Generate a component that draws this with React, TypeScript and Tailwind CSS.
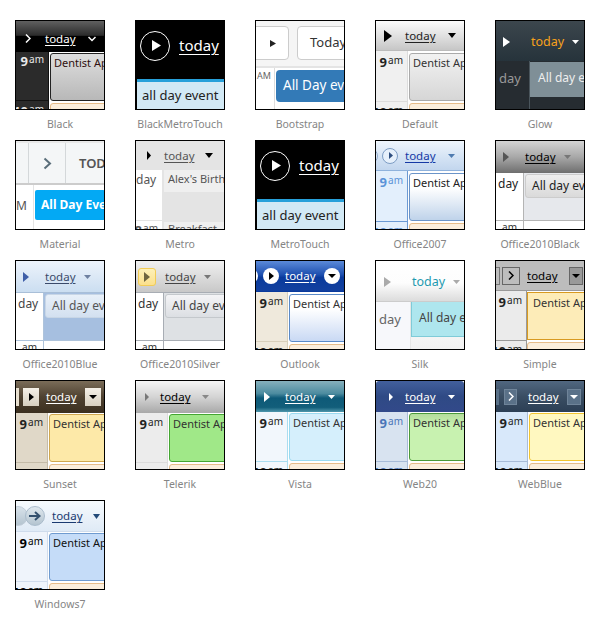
import React from "react";

const Tri = ({ w = 6, h = 10, cls = "text-black", ml = "" }: { w?: number; h?: number; cls?: string; ml?: string }) => (
  <svg width={w} height={h} viewBox="0 0 6 10" preserveAspectRatio="none" className={`shrink-0 ${cls} ${ml}`}>
    <polygon points="0,0 6,5 0,10" fill="currentColor" />
  </svg>
);
const Caret = ({ w = 8, h = 5, cls = "text-black", ml = "" }: { w?: number; h?: number; cls?: string; ml?: string }) => (
  <svg width={w} height={h} viewBox="0 0 8 5" preserveAspectRatio="none" className={`shrink-0 ${cls} ${ml}`}>
    <polygon points="0,0 8,0 4,5" fill="currentColor" />
  </svg>
);
const Chev = ({ cls = "text-white", ml = "", dir = "r" }: { cls?: string; ml?: string; dir?: "r" | "d" }) => (
  <svg width={dir === "r" ? 6 : 8} height={dir === "r" ? 9 : 6} viewBox={dir === "r" ? "0 0 6 9" : "0 0 8 6"} className={`shrink-0 ${cls} ${ml}`}>
    <polyline points={dir === "r" ? "1,0.5 5,4.5 1,8.5" : "0.5,1 4,4.5 7.5,1"} fill="none" stroke="currentColor" strokeWidth="1.5" />
  </svg>
);
const Today = ({ cls = "text-black", ml = "" }: { cls?: string; ml?: string }) => (
  <span className={`text-[11.5px] leading-none underline underline-offset-[2px] shrink-0 ${cls} ${ml}`}>today</span>
);
const Hdr = ({ cls, children }: { cls: string; children?: React.ReactNode }) => (
  <div className={`flex items-center shrink-0 overflow-hidden ${cls}`}>{children}</div>
);
const Time = ({ cls = "text-[#222]", h = "9" }: { cls?: string; h?: string }) => (
  <span className={`leading-none whitespace-nowrap ${cls}`}>
    <span className="text-[13px] font-bold">{h}</span>
    <span className="text-[10px] relative top-[-3px] ml-[1px]">am</span>
  </span>
);

/* Day view body: 9am column + Dentist appointment + clipped 10am row */
const DayBody = ({
  w,
  bg,
  line,
  timeCls,
  ap,
  apText = "text-[#333]",
  gap = "pl-[1px] pt-[1px]",
  rowH = "h-[49px]",
  timeTop = "pt-[2px]",
}: {
  w: string;
  bg: string;
  line: string;
  timeCls?: string;
  ap: string;
  apText?: string;
  gap?: string;
  rowH?: string;
  timeTop?: string;
}) => (
  <div className="flex flex-1 min-h-0">
    <div className={`flex flex-col shrink-0 border-r ${w} ${bg} ${line}`}>
      <div className={`flex justify-end items-start pr-[4px] border-b shrink-0 ${rowH} ${line} ${timeTop}`}>
        <Time cls={timeCls} />
      </div>
      <div className="flex justify-end pr-[4px] pt-[1px]">
        <Time cls={timeCls} h="10" />
      </div>
    </div>
    <div className={`flex-1 min-w-0 flex flex-col bg-white overflow-hidden ${gap}`}>
      <div className={`shrink-0 border rounded-[3px] w-[60px] pl-[3px] pt-[1px] text-[11px] leading-[16px] whitespace-nowrap overflow-hidden h-[48px] ${ap} ${apText}`}>
        Dentist Appointment
      </div>
      <div className="shrink-0 mt-[2px] h-[12px] w-[60px] border border-[#e6bc8a] rounded-[3px] bg-[#fbeedc]" />
    </div>
  </div>
);

/* Week view body: all-day header row */
const AllDay = ({
  timeW,
  evCls,
  evText,
  fill,
  line,
  dayCls = "text-[#333]",
  label = "All day event",
}: {
  timeW: string;
  evCls: string;
  evText: string;
  fill: string;
  line: string;
  dayCls?: string;
  label?: string;
}) => (
  <div className="flex flex-col flex-1 min-h-0 bg-white">
    <div className={`flex shrink-0 h-[48px] border-b ${line}`}>
      <div className={`shrink-0 border-r overflow-hidden pl-[2px] pt-[2px] text-[12px] leading-[18px] ${timeW} ${line} ${dayCls}`}>day</div>
      <div className={`flex-1 min-w-0 overflow-hidden ${fill}`}>
        <div className={`h-[24px] ml-[1px] mt-[1px] w-[70px] rounded-[3px] border text-[12px] leading-[21px] pl-[6px] whitespace-nowrap overflow-hidden ${evCls} ${evText}`}>{label}</div>
      </div>
    </div>
    <div className="flex flex-1 min-h-0">
      <div className={`shrink-0 border-r text-[10px] leading-[10px] flex justify-end pt-[1px] pr-[6px] text-[#333] ${timeW} ${line}`}>am</div>
      <div className="flex-1" />
    </div>
  </div>
);

const MetroTouch = () => (
  <div className="flex flex-col h-full bg-black">
    <Hdr cls="h-[58px] pl-[4px] pb-[9px]">
      <div className="w-[30px] h-[30px] rounded-full border border-white flex items-center justify-center pl-[2px]">
        <Tri w={9} h={11} cls="text-white" />
      </div>
      <span className="ml-[9px] text-[15px] leading-none text-white underline underline-offset-[3px]">today</span>
    </Hdr>
    <div className="flex-1 ml-[1px] border-t-[3px] border-[#27a0da] bg-[#d2e9f5] pl-[5px] pt-[3px] text-[13px] leading-[20px] text-[#222] whitespace-nowrap overflow-hidden">
      all day event
    </div>
  </div>
);

const items: { name: string; el: React.ReactNode }[] = [
  {
    name: "Black",
    el: (
      <div className="flex flex-col h-full">
        <Hdr cls="h-[31px] pt-[4px] bg-[linear-gradient(#606060,#2c2c2c_46%,#000_50%,#000)]">
          <Chev ml="ml-[9px]" />
          <Today cls="text-white" ml="ml-[14px]" />
          <Chev dir="d" ml="ml-[12px]" />
        </Hdr>
        <DayBody w="w-[33px]" bg="bg-[#2b2b2b]" line="border-[#111]" timeCls="text-[#e8e8e8]" timeTop="pt-[0px]"
          ap="border-[#222] bg-[linear-gradient(#dedede,#b8b8b8)]" apText="text-[#301010]" gap="pl-[1px] pt-[1px] bg-[#1c1c1c]" />
      </div>
    ),
  },
  { name: "BlackMetroTouch", el: <MetroTouch /> },
  {
    name: "Bootstrap",
    el: (
      <div className="flex flex-col h-full bg-white">
        <Hdr cls="h-[47px] bg-[#f5f5f5] border-b-2 border-[#e4e4e4] pb-[1px]">
          <div className="ml-[-8px] w-[41px] h-[34px] shrink-0 bg-white border border-[#ccc] rounded-[4px] flex items-center justify-center pl-[8px]">
            <Tri w={6} h={7} cls="text-[#222]" />
          </div>
          <div className="ml-[8px] w-[60px] h-[34px] shrink-0 bg-white border border-[#ccc] rounded-[4px] pl-[12px] text-[13px] leading-[31px] text-[#333]">Today</div>
        </Hdr>
        <div className="flex flex-1 min-h-0">
          <div className="w-[19px] shrink-0 border-r border-[#ddd] flex justify-end pr-[3px] pt-[1px] text-[9px] leading-[14px] text-[#666]">AM</div>
          <div className="flex-1 min-w-0 overflow-hidden pl-[1px] pt-[2px]">
            <div className="w-[72px] h-[32px] bg-[#337ab7] rounded-[4px] text-white text-[13.5px] leading-[31px] pl-[7px] whitespace-nowrap overflow-hidden">All Day event</div>
          </div>
        </div>
      </div>
    ),
  },
  {
    name: "Default",
    el: (
      <div className="flex flex-col h-full rounded-t-[3px] overflow-hidden">
        <Hdr cls="h-[30px] bg-[linear-gradient(#fbfbfb,#dcdcdc_60%,#c6c6c6)] border-b border-[#bbb]">
          <Tri w={8} h={12} ml="ml-[8px]" />
          <Today cls="text-[#222]" ml="ml-[13px]" />
          <Caret ml="ml-[12px]" />
        </Hdr>
        <DayBody w="w-[32px]" bg="bg-[#f0f0f0]" line="border-[#dcdcdc]" gap="pl-[1px] pt-[2px]"
          ap="border-[#aaa] bg-[linear-gradient(#f2f2f2,#d6d6d6)]" rowH="h-[51px]" />
      </div>
    ),
  },
  {
    name: "Glow",
    el: (
      <div className="flex flex-col h-full bg-[#262c31]">
        <Hdr cls="h-[40px] pt-[2px] bg-[linear-gradient(#3c464d,#26333b)]">
          <Tri w={7} h={10} cls="text-white" ml="ml-[7px]" />
          <span className="ml-[21px] text-[12.5px] leading-none text-[#f7a11b]">today</span>
          <Caret w={7} h={4} cls="text-white" ml="ml-[8px]" />
        </Hdr>
        <div className="flex flex-1 min-h-0">
          <div className="w-[34px] shrink-0 border-r border-[#4a555c] text-[13px] leading-[20px] text-[#999] pl-[3px] pt-[7px]">day</div>
          <div className="flex-1 min-w-0">
            <div className="h-[35px] mt-[1px] bg-[#7f8f97] text-[#eee] text-[12px] leading-[32px] pl-[8px] whitespace-nowrap overflow-hidden">All day event</div>
          </div>
        </div>
      </div>
    ),
  },
  {
    name: "Material",
    el: (
      <div className="flex flex-col h-full bg-white">
        <Hdr cls="h-[44px] bg-[#f4f6f7] border-b-2 border-[#ccc] border-t-2 border-t-[#e8e8e8] items-stretch">
          <div className="w-[13px] shrink-0 border-r border-[#d4d8da]" />
          <div className="w-[37px] shrink-0 border-r border-[#d4d8da] flex items-center justify-center"><svg width="9" height="13" viewBox="0 0 9 13" className="text-[#5a6e7a]"><polyline points="1.5,1.5 7,6.5 1.5,11.5" fill="none" stroke="currentColor" strokeWidth="2" /></svg></div>
          <div className="pl-[13px] text-[13px] font-semibold leading-[40px] text-[#555]">TODAY</div>
        </Hdr>
        <div className="flex flex-1 min-h-0">
          <div className="w-[18px] shrink-0 border-r border-[#e4e4e4] flex justify-end pr-[6px] pt-[12px] text-[12px] leading-[18px] text-[#555]">M</div>
          <div className="flex-1 min-w-0 overflow-hidden pl-[1px] pt-[5px]">
            <div className="w-[70px] h-[30px] bg-[#03a9f4] rounded-[2px] text-white text-[12px] font-bold leading-[29px] pl-[6px] whitespace-nowrap overflow-hidden">All Day Event</div>
          </div>
        </div>
      </div>
    ),
  },
  {
    name: "Metro",
    el: (
      <div className="flex flex-col h-full bg-[#e4e4e4]">
        <Hdr cls="h-[29px]">
          <Tri w={4} h={9} ml="ml-[11px]" />
          <Today cls="text-[#555]" ml="ml-[13px]" />
          <Caret ml="ml-[10px]" />
        </Hdr>
        <div className="flex flex-1 min-h-0">
          <div className="w-[26px] shrink-0 bg-white flex flex-col text-[#555]">
            <div className="h-[51px] shrink-0 border-b border-[#e4e4e4] text-[12px] leading-[16px] pt-[2px] whitespace-nowrap">day</div>
            <div className="flex justify-end pr-[4px]"><Time cls="text-[#555]" h="8" /></div>
          </div>
          <div className="w-[2px] shrink-0 bg-[#e4e4e4]" />
          <div className="flex-1 min-w-0 flex flex-col">
            <div className="h-[22px] bg-[#efefef] text-[11px] leading-[16px] pl-[4px] pt-[1px] text-[#555] whitespace-nowrap overflow-hidden">Alex's Birthday</div>
            <div className="h-[30px] shrink-0" />
            <div className="flex-1 bg-[#efefef] text-[11px] leading-[14px] pl-[4px] text-[#555] whitespace-nowrap overflow-hidden">Breakfast</div>
          </div>
        </div>
      </div>
    ),
  },
  { name: "MetroTouch", el: <MetroTouch /> },
  {
    name: "Office2007",
    el: (
      <div className="flex flex-col h-full rounded-t-[3px] overflow-hidden">
        <Hdr cls="h-[30px] bg-[linear-gradient(#eef5fc,#d3e2f4_60%,#c2d6ee)] border-b border-[#8fb2dc]">
          <div className="ml-[-14px] w-[16px] h-[16px] shrink-0 rounded-full border border-[#8ea9cc] bg-[#e6f0fb]" />
          <div className="ml-[4px] w-[16px] h-[16px] shrink-0 rounded-full border border-[#7c9cc4] bg-[#e6f0fb] flex items-center justify-center pl-[1px]">
            <Tri w={4} h={7} cls="text-[#2f4f80]" />
          </div>
          <Today cls="text-[#1539a5]" ml="ml-[7px]" />
          <Caret w={7} h={4} cls="text-[#4f7bb0]" ml="ml-[12px]" />
        </Hdr>
        <DayBody w="w-[32px]" bg="bg-[#e3effc]" line="border-[#6c9ad4]" timeCls="text-[#5b93d8]" gap="pl-[1px] pt-[2px]"
          ap="border-[#6b94c8] bg-[linear-gradient(#fff,#fff_30%,#bfd3ea)]" apText="text-[#222]" rowH="h-[51px]" />
      </div>
    ),
  },
  {
    name: "Office2010Black",
    el: (
      <div className="flex flex-col h-full">
        <Hdr cls="h-[32px] bg-[linear-gradient(#d4d4d4,#a8a8a8_50%,#6e6e6e)]">
          <Tri w={6} h={10} cls="text-[#555]" ml="ml-[7px]" />
          <Today ml="ml-[16px]" />
          <Caret w={7} h={4} cls="text-[#777]" ml="ml-[8px]" />
        </Hdr>
        <AllDay timeW="w-[28px]" line="border-[#b4b4b4]" fill="bg-[#e6e8ec]" dayCls="text-[#222]"
          evCls="border-[#ccc] bg-[linear-gradient(#eee,#dadada)]" evText="text-[#222]" />
      </div>
    ),
  },
  {
    name: "Office2010Blue",
    el: (
      <div className="flex flex-col h-full">
        <Hdr cls="h-[32px] bg-[linear-gradient(#edf3fb,#cbdef1)] border-b border-[#a9bfd8]">
          <Tri w={6} h={10} cls="text-[#3f5fa8]" ml="ml-[7px]" />
          <Today cls="text-[#3a4a6a]" ml="ml-[16px]" />
          <Caret w={7} h={4} cls="text-[#6e80a0]" ml="ml-[8px]" />
        </Hdr>
        <AllDay timeW="w-[28px]" line="border-[#aec3db]" fill="bg-[#a6bfe0]" dayCls="text-[#444]"
          evCls="border-[#c8d6e6] bg-[linear-gradient(#e8f0f9,#d3e0f0)]" evText="text-[#555]" />
      </div>
    ),
  },
  {
    name: "Office2010Silver",
    el: (
      <div className="flex flex-col h-full">
        <Hdr cls="h-[32px] bg-[linear-gradient(#f0f0f0,#c8c8c8)] border-b border-[#a8adb4]">
          <div className="ml-[2px] w-[18px] h-[18px] shrink-0 rounded-[3px] border border-[#f2cc55] bg-[linear-gradient(#fdf0b8,#fbe08c)] flex items-center justify-center">
            <Tri w={6} h={10} cls="text-[#6f6540]" />
          </div>
          <Today cls="text-[#444]" ml="ml-[9px]" />
          <Caret w={7} h={4} cls="text-[#777]" ml="ml-[8px]" />
        </Hdr>
        <AllDay timeW="w-[28px]" line="border-[#a8adb4]" fill="bg-[#dee1e4]" dayCls="text-[#333]"
          evCls="border-[#c4c8cc] bg-[linear-gradient(#f4f4f6,#dcdfe3)]" evText="text-[#444]" />
      </div>
    ),
  },
  {
    name: "Outlook",
    el: (
      <div className="flex flex-col h-full">
        <Hdr cls="h-[31px] bg-[linear-gradient(#5b8ad8,#1e50b0_45%,#0a3a9c_55%,#12409f)] border-b border-[#0a3a9c]">
          <div className="ml-[-14px] w-[16px] h-[16px] shrink-0 rounded-full bg-white" />
          <div className="ml-[5px] w-[16px] h-[16px] shrink-0 rounded-full bg-white flex items-center justify-center pl-[1px]"><Tri w={5} h={8} /></div>
          <Today cls="text-white" ml="ml-[6px]" />
          <div className="ml-[8px] w-[16px] h-[16px] shrink-0 rounded-full bg-white flex items-center justify-center"><Caret w={8} h={4} /></div>
        </Hdr>
        <DayBody w="w-[32px]" bg="bg-[#efe9dc]" line="border-[#d8d0bc]" gap="pl-[1px] pt-[2px]"
          ap="border-[#5a8ac8] bg-[linear-gradient(#fff,#fff_30%,#c9d9f4)]" rowH="h-[50px]" />
      </div>
    ),
  },
  {
    name: "Silk",
    el: (
      <div className="flex flex-col h-full bg-white">
        <Hdr cls="h-[41px] pt-[2px] bg-[linear-gradient(#fff,#fdfdfd_55%,#dcdcdc)] border-b border-[#ccc]">
          <Tri w={7} h={10} cls="text-[#aaa]" ml="ml-[8px]" />
          <span className="ml-[21px] text-[12.5px] leading-none text-[#1e9ab0]">today</span>
          <Caret w={7} h={4} cls="text-[#aaa]" ml="ml-[8px]" />
        </Hdr>
        <div className="flex flex-1 min-h-0">
          <div className="w-[35px] shrink-0 bg-[#f7f8fb] border-r border-[#e6e6e6] text-[13px] leading-[20px] text-[#666] pl-[3px] pt-[7px]">day</div>
          <div className="flex-1 min-w-0 overflow-hidden bg-[linear-gradient(#fff,#f1f1f1)]">
            <div className="h-[35px] bg-[#aee6ee] border-l border-b border-[#7fcbd8] text-[#444] text-[12px] leading-[32px] pl-[7px] whitespace-nowrap overflow-hidden">All day event</div>
          </div>
        </div>
      </div>
    ),
  },
  {
    name: "Simple",
    el: (
      <div className="flex flex-col h-full">
        <Hdr cls="h-[30px] bg-[#bdbdbd] border-b border-[#999]">
          <div className="ml-[-13px] w-[17px] h-[18px] shrink-0 border border-[#777]" />
          <div className="ml-[2px] w-[18px] h-[18px] shrink-0 border border-[#666] flex items-center justify-center"><Chev cls="text-black" /></div>
          <Today ml="ml-[7px]" />
          <div className="ml-[11px] w-[14px] h-[18px] shrink-0 border border-[#666] bg-[#999] flex items-center justify-center"><Caret w={8} h={4} /></div>
        </Hdr>
        <DayBody w="w-[31px]" bg="bg-[#ebebeb]" line="border-[#999]"
          ap="rounded-none border-[#d89a20] bg-[#fdecb8] !pl-[5px] !pt-[2px]" gap="pl-0 pt-[1px]" rowH="h-[50px]" />
      </div>
    ),
  },
  {
    name: "Sunset",
    el: (
      <div className="flex flex-col h-full">
        <Hdr cls="h-[32px] bg-[linear-gradient(#7a6c58,#4e4130_50%,#3c3020)]">
          <div className="ml-[-13px] w-[16px] h-[18px] shrink-0 bg-[#e8e0d0]" />
          <div className="ml-[4px] w-[16px] h-[18px] shrink-0 bg-[linear-gradient(#f4f0e8,#d8d0c0)] flex items-center justify-center"><Tri w={5} h={8} /></div>
          <Today cls="text-white" ml="ml-[7px]" />
          <div className="ml-[8px] w-[16px] h-[18px] shrink-0 bg-[linear-gradient(#f4f0e8,#d8d0c0)] flex items-center justify-center"><Caret w={8} h={4} /></div>
        </Hdr>
        <DayBody w="w-[32px]" bg="bg-[#e0d8c8]" line="border-[#c4bba8]" gap="pl-[1px] pt-[1px]"
          ap="border-[#d0a850] bg-[#fde9a8]" rowH="h-[50px]" />
      </div>
    ),
  },
  {
    name: "Telerik",
    el: (
      <div className="flex flex-col h-full rounded-t-[3px] overflow-hidden">
        <Hdr cls="h-[32px] bg-[linear-gradient(#f4f4f4,#d4d4d4_50%,#a8a8a8)]">
          <Tri w={4} h={8} cls="text-[#777]" ml="ml-[9px]" />
          <Today ml="ml-[11px]" />
          <Caret w={7} h={4} cls="text-[#888]" ml="ml-[11px]" />
        </Hdr>
        <DayBody w="w-[32px]" bg="bg-[#ececec]" line="border-[#dcdcdc]"
          ap="border-[#44a632] bg-[#a0e888]" rowH="h-[50px]" />
      </div>
    ),
  },
  {
    name: "Vista",
    el: (
      <div className="flex flex-col h-full">
        <Hdr cls="h-[31px] bg-[linear-gradient(#86b0bc,#4d8ca0_40%,#0e5a78_55%,#125e7a_85%,#4f97ac)]">
          <Tri w={6} h={10} cls="text-white" ml="ml-[8px]" />
          <Today cls="text-white" ml="ml-[15px]" />
          <Caret w={7} h={4} cls="text-white" ml="ml-[12px]" />
        </Hdr>
        <DayBody w="w-[32px]" bg="bg-[#f2f7fc]" line="border-[#aaddf0]"
          ap="border-[#9adaf0] bg-[#d5effc]" rowH="h-[50px]" />
      </div>
    ),
  },
  {
    name: "Web20",
    el: (
      <div className="flex flex-col h-full rounded-t-[3px] overflow-hidden">
        <Hdr cls="h-[31px] bg-[linear-gradient(#425f9c,#2f4a85_50%,#32498a)]">
          <Tri w={4} h={8} cls="text-white" ml="ml-[13px]" />
          <Today cls="text-white" ml="ml-[12px]" />
          <Caret w={7} h={4} cls="text-white" ml="ml-[12px]" />
        </Hdr>
        <DayBody w="w-[32px]" bg="bg-[#d8e3f0]" line="border-[#a8bcd8]" timeCls="text-[#4a75b8]"
          ap="border-[#4a9a3a] bg-[linear-gradient(#b4dc9c,#c8f2b0_25%)]" rowH="h-[50px]" />
      </div>
    ),
  },
  {
    name: "WebBlue",
    el: (
      <div className="flex flex-col h-full">
        <Hdr cls="h-[31px] bg-[linear-gradient(#516780,#3a4e63_50%,#2c3f55)]">
          <div className="ml-[-11px] w-[14px] h-[16px] shrink-0 bg-[#5a7188]" />
          <div className="ml-[5px] w-[13px] h-[16px] shrink-0 bg-[#5a7188] border border-[#6f8499] flex items-center justify-center"><Chev /></div>
          <Today cls="text-white" ml="ml-[11px]" />
          <div className="ml-[8px] w-[14px] h-[16px] shrink-0 bg-[#5a7188] border border-[#6f8499] flex items-center justify-center"><Caret w={8} h={4} cls="text-white" /></div>
        </Hdr>
        <DayBody w="w-[32px]" bg="bg-[#d8e8fa]" line="border-[#a8bcd8]"
          ap="border-[#f2c530] bg-[#fff8c0]" rowH="h-[50px]" />
      </div>
    ),
  },
  {
    name: "Windows7",
    el: (
      <div className="flex flex-col h-full">
        <Hdr cls="h-[31px] bg-[linear-gradient(#f6fafd,#dfeaf6)] border-b border-[#cfdcec]">
          <div className="ml-[-8px] w-[20px] h-[20px] shrink-0 rounded-full bg-[linear-gradient(#d8e2ea,#b4c4d0)] border border-[#c0ccd8]" />
          <div className="ml-[-3px] w-[20px] h-[20px] shrink-0 rounded-full bg-[linear-gradient(#dfe8ee,#b4c4d0)] border border-[#aabccc] flex items-center justify-center">
            <svg width="12" height="10" viewBox="0 0 12 10" className="text-[#33506e]"><path d="M0 5H10M6 1L10.5 5L6 9" fill="none" stroke="currentColor" strokeWidth="2" /></svg>
          </div>
          <Today cls="text-[#1a3a70]" ml="ml-[7px]" />
          <Caret w={7} h={5} cls="text-[#234a78]" ml="ml-[10px]" />
        </Hdr>
        <DayBody w="w-[32px]" bg="bg-[#eff4fb]" line="border-[#d0dcec]" timeCls="text-black"
          ap="border-[#6f9bd0] bg-[#c5dcf8]" apText="text-[#111]" rowH="h-[50px]" />
      </div>
    ),
  },
];

export default function App() {
  return (
    <div className="w-[600px] h-[620px] bg-white pt-[20px] pl-[15px] font-['Noto_Sans','Open_Sans',sans-serif]">
      <div className="grid grid-cols-[repeat(5,90px)] gap-x-[30px] auto-rows-[120px]">
        {items.map((it) => (
          <div key={it.name} className="flex flex-col items-center">
            <div className="w-[90px] h-[90px] border border-black overflow-hidden shrink-0 bg-white">{it.el}</div>
            <div className="mt-[6px] w-[120px] text-center text-[10.5px] leading-[16px] text-[#858585] whitespace-nowrap">{it.name}</div>
          </div>
        ))}
      </div>
    </div>
  );
}
